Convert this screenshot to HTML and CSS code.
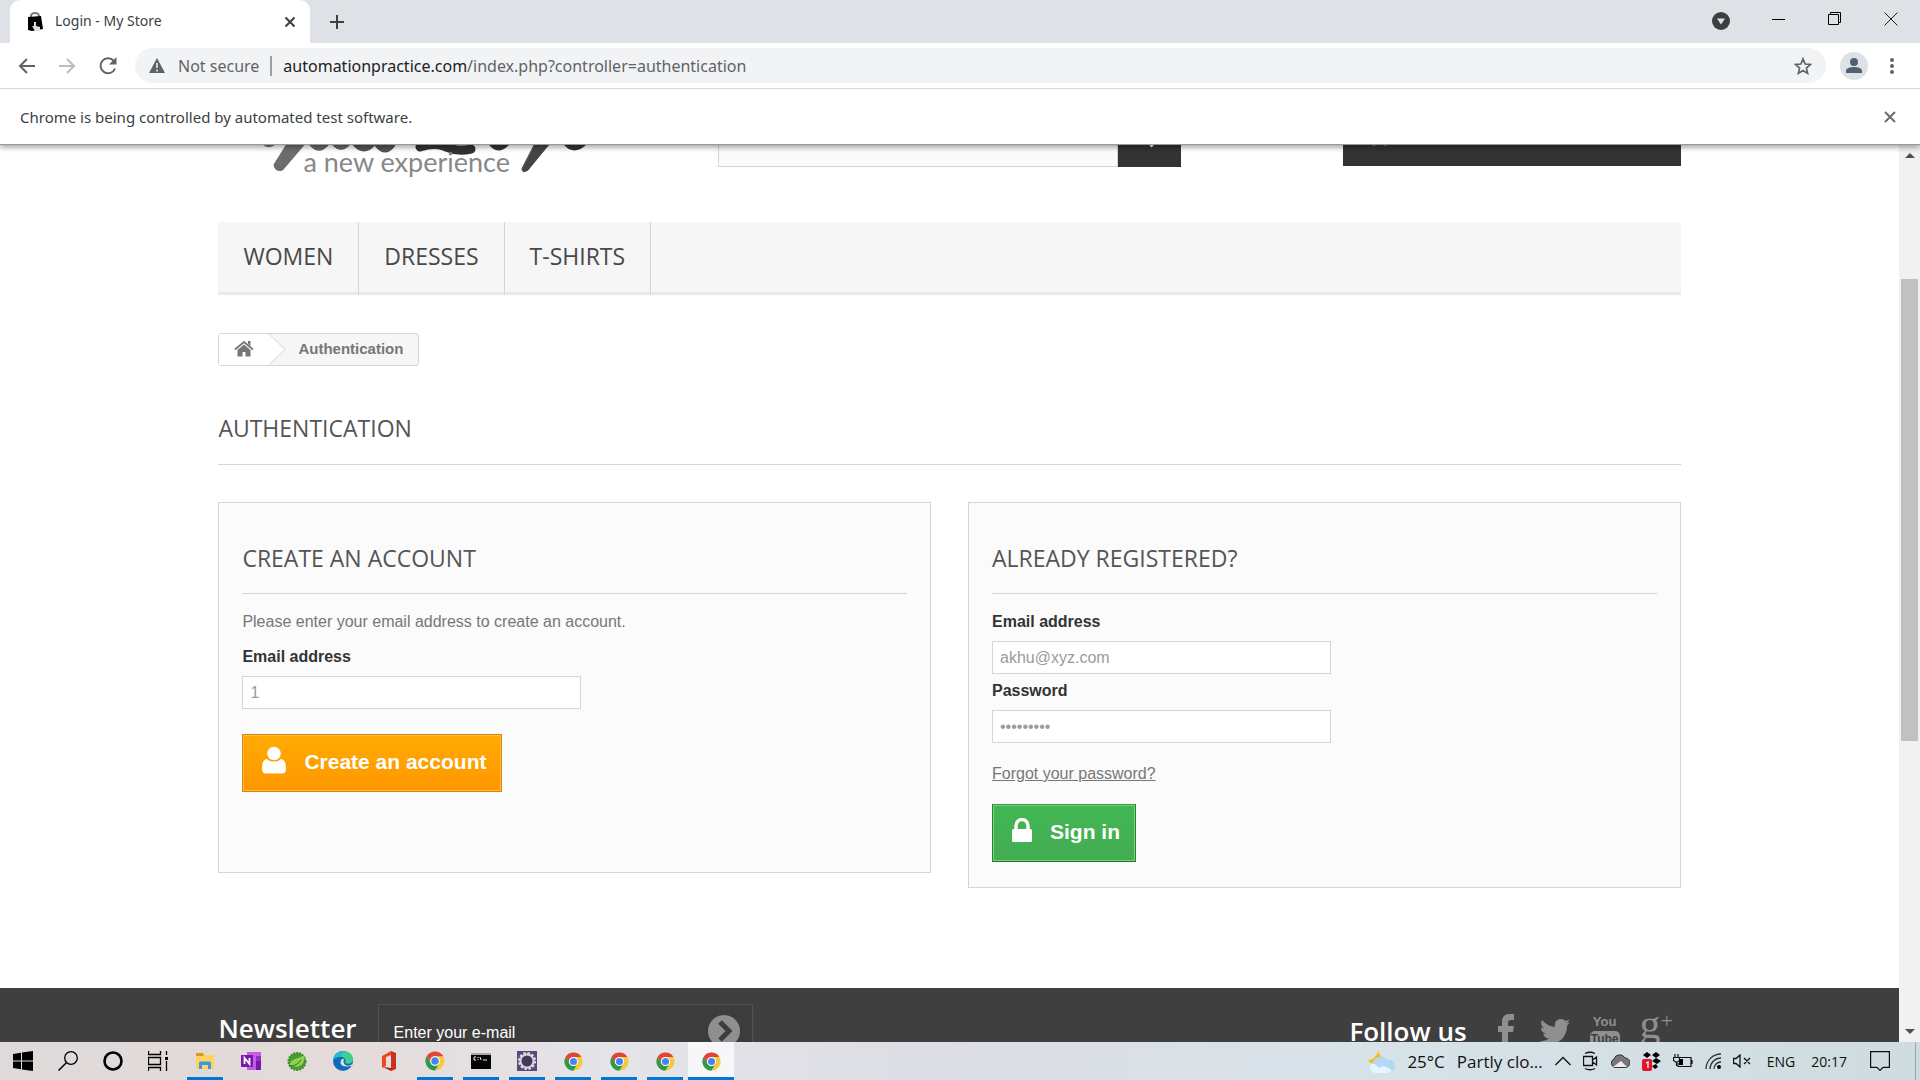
FILE: index.html
```html
<!DOCTYPE html>
<html lang="en">
<head>
<meta charset="utf-8">
<title>Login - My Store</title>
<link rel="stylesheet" href="styles.css">
</head>
<body>
<svg width="0" height="0" class="defs" aria-hidden="true">
  <symbol id="chrome" viewBox="0 0 48 48">
    <circle cx="24" cy="24" r="23" fill="#f6c945"/>
    <path d="M4.100 12.500A23 23 0 0 1 43.900 12.500H24A11.500 11.500 0 0 0 14 29.700Z" fill="#e0453a"/>
    <path d="M4.100 12.500A23 23 0 0 0 24 47L34 29.700A11.500 11.500 0 0 1 14 29.700Z" fill="#2a9a50"/>
    <circle cx="24" cy="24" r="11.500" fill="#fff"/>
    <circle cx="24" cy="24" r="9" fill="#4285f4"/>
  </symbol>
</svg>

<header class="browser">
  <div class="tabstrip">
    <div class="tab">
      <svg class="favicon" width="18" height="20" viewBox="0 0 18 20"><path d="M5 6V4a4 3 0 0 1 8 0v2" fill="none" stroke="#777" stroke-width="2"/><path d="M2 5l13-1 2 13-11 2-4-1z" fill="#000"/><path d="M8 10v4l-2 0 3 5h5v-4l-4-1v-4z" fill="#ddd"/></svg>
      <span class="tab-title">Login - My Store</span>
      <button class="plain" aria-label="Close tab"><svg width="12" height="12" viewBox="0 0 12 12"><path d="M1.500 1.500l9 9m0-9l-9 9" stroke="#3c4043" stroke-width="2"/></svg></button>
    </div>
    <button class="plain new-tab" aria-label="New tab"><svg width="16" height="16" viewBox="0 0 16 16"><path d="M8 1v14M1 8h14" stroke="#3c4043" stroke-width="2"/></svg></button>
    <div class="window-buttons">
      <button class="plain" aria-label="Search tabs"><svg width="18" height="22" viewBox="0 0 18 22"><circle cx="9" cy="13" r="9" fill="#3c4043"/><path d="M5 10.500h8l-4 6z" fill="#dee1e6"/></svg></button>
      <button class="plain" aria-label="Minimize"><svg width="14" height="14" viewBox="0 0 14 14"><path d="M0 7.500h13" stroke="#000"/></svg></button>
      <button class="plain" aria-label="Restore"><svg width="14" height="14" viewBox="0 0 14 14"><path d="M.5 2.500h10v10H.5zM2.500 2V.5h10v10H11" fill="none" stroke="#000"/></svg></button>
      <button class="plain" aria-label="Close"><svg width="14" height="14" viewBox="0 0 14 14"><path d="M.5.5l13 13m0-13l-13 13" stroke="#222"/></svg></button>
    </div>
  </div>
  <div class="toolbar">
    <button class="plain" aria-label="Back"><svg width="18" height="18" viewBox="0 0 18 18"><path d="M17 9H2M9 2L2 9l7 7" fill="none" stroke="#5f6368" stroke-width="2"/></svg></button>
    <button class="plain" aria-label="Forward"><svg width="18" height="18" viewBox="0 0 18 18"><path d="M1 9h15M9 2l7 7-7 7" fill="none" stroke="#babcbe" stroke-width="2"/></svg></button>
    <button class="plain" aria-label="Reload"><svg width="20" height="20" viewBox="0 0 20 20"><path d="M17 12.500A7.500 7.500 0 1 1 15.800 5" fill="none" stroke="#5f6368" stroke-width="2"/><path d="M18.500 1v7.500H11z" fill="#5f6368"/></svg></button>
    <div class="omnibox">
      <svg width="16" height="15" viewBox="0 0 16 15"><path d="M8 0l8 15H0z" fill="#5f6368"/><path d="M8 5v5M8 11.500v2" stroke="#f1f3f4" stroke-width="1.500"/></svg>
      <span class="insecure">Not secure</span>
      <span class="url"><b>automationpractice.com</b>/index.php?controller=authentication</span>
      <svg class="star" width="18" height="18" viewBox="0 0 24 24"><path d="M12 2.500l2.800 6.800 7.200.6-5.500 4.800 1.700 7.100L12 18l-6.200 3.800 1.700-7.100L2 9.900l7.200-.6z" fill="none" stroke="#5f6368" stroke-width="2.200"/></svg>
    </div>
    <svg class="avatar" width="28" height="28" viewBox="0 0 28 28"><circle cx="14" cy="14" r="14" fill="#dee1e6"/><circle cx="14" cy="10" r="4" fill="#525f73"/><path d="M6 21v-2c0-3 4-4 8-4s8 1 8 4v2z" fill="#525f73"/></svg>
    <button class="plain" aria-label="Menu"><svg width="4" height="18" viewBox="0 0 4 18"><g fill="#5f6368"><circle cx="2" cy="3" r="2"/><circle cx="2" cy="9" r="2"/><circle cx="2" cy="15" r="2"/></g></svg></button>
  </div>
  <div class="infobar">
    <span>Chrome is being controlled by automated test software.</span>
    <button class="plain" aria-label="Dismiss"><svg width="12" height="12" viewBox="0 0 12 12"><path d="M1 1l10 10m0-10L1 11" stroke="#6b6e72" stroke-width="2"/></svg></button>
  </div>
</header>

<div class="viewport">
  <div class="page">
    <div class="container masthead">
      <a class="logo" href="#" aria-label="My Store">
        <svg class="script-mark" width="344" height="44" viewBox="0 0 344 44">
          <g fill="none" stroke-linecap="round">
            <path d="M2 3q3 4 8 2" stroke="#777" stroke-width="5"/>
            <path d="M28 2L44 2L20 30Q14 32 13 26z" fill="#6c6e6e" stroke="#6c6e6e" stroke-width="3" stroke-linejoin="round"/>
            <path d="M51 5q6 6 12 0M74 5q5 5 10 0" stroke="#666" stroke-width="7"/>
            <path d="M94 3q8 10 16 0M117 5q6 8 12 0" stroke="#555" stroke-width="9"/>
            <path d="M158 8q16-5 26 0 12 5 25 2" stroke="#333" stroke-width="9"/>
            <path d="M230 4q6 8 14 0M305 4q7 8 16 0" stroke="#333" stroke-width="7"/>
            <path d="M274 3h15L266 31Q260 35 260 30z" fill="#444" stroke="#444"/>
          </g>
        </svg>
        <span class="tagline">a new experience</span>
      </a>
      <form class="search">
        <input type="text" aria-label="Search">
        <button type="button" aria-label="Search"><svg width="22" height="22" viewBox="0 0 22 22"><circle cx="9" cy="9" r="6" fill="none" stroke="#fff" stroke-width="3"/><path d="M13 13l6 6" stroke="#fff" stroke-width="4"/></svg></button>
      </form>
      <a class="cart" href="#"><svg width="26" height="22" viewBox="0 0 26 22"><path d="M0 2h5l3 12h13l3-9H6" fill="none" stroke="#fff" stroke-width="2"/><circle cx="9" cy="17" r="2.500" fill="#ccc"/><circle cx="20" cy="17" r="2.500" fill="#ccc"/></svg><b>Cart</b><span>(empty)</span></a>
    </div>
    <nav class="container menu">
      <a href="#">WOMEN</a><a href="#">DRESSES</a><a href="#">T-SHIRTS</a>
    </nav>
    <main class="container">
      <div class="crumbs">
        <a class="home" href="#" aria-label="Home"><svg width="20" height="16" viewBox="0 0 20 16"><path d="M3.500 9L10 3.500 16.500 9v6.500h-5V11h-3v4.500h-5z" fill="#777"/><path d="M1 8.500L10 1l9 7.500" fill="none" stroke="#777" stroke-width="1.800"/><path d="M14 0h2.500v5L14 3z" fill="#777"/></svg></a>
        <svg class="chevron" width="17" height="31" viewBox="0 0 17 31"><path d="M0 0l16 15.500L0 31" fill="#fff" stroke="#d6d4d4"/></svg>
        <span>Authentication</span>
      </div>
      <h1>AUTHENTICATION</h1>
      <div class="columns">
        <form class="box">
          <h2>CREATE AN ACCOUNT</h2>
          <p>Please enter your email address to create an account.</p>
          <label for="new-email">Email address</label>
          <input id="new-email" type="text" value="1">
          <button type="button" class="action orange"><svg width="24" height="28" viewBox="0 0 24 28"><circle cx="12" cy="7.500" r="6.800" fill="#fff"/><path d="M5 13c2 2 4 2.500 7 2.500s5-.5 7-2.500c4 0 5 5 5 10 0 3-1.500 4.500-4 4.500H4C1.500 27.500 0 26 0 23c0-5 1-10 5-10z" fill="#fff"/></svg>Create an account</button>
        </form>
        <form class="box">
          <h2>ALREADY REGISTERED?</h2>
          <label for="email">Email address</label>
          <input id="email" type="text" value="akhu@xyz.com">
          <label for="password">Password</label>
          <input id="password" type="password" value="abcdefghi">
          <a class="forgot" href="#">Forgot your password?</a>
          <button type="button" class="action green"><svg width="20" height="24" viewBox="0 0 20 24"><path d="M4 12V7.500a6 6 0 0 1 12 0V12" fill="none" stroke="#fff" stroke-width="3.400"/><rect y="11" width="20" height="13" rx="1.500" fill="#fff"/></svg>Sign in</button>
        </form>
      </div>
    </main>
    <footer>
      <div class="container footer-row">
        <h3><label for="newsletter">Newsletter</label></h3>
        <div class="newsletter">
          <input id="newsletter" type="text" value="Enter your e-mail">
          <button type="button" class="plain" aria-label="Subscribe"><svg width="32" height="32" viewBox="0 0 32 32"><circle cx="16" cy="16" r="16" fill="#908f8f"/><path d="M12 7l9 9-9 9" fill="none" stroke="#3d3d3d" stroke-width="5"/></svg></button>
        </div>
        <h3 class="follow">Follow us</h3>
        <div class="social">
          <a href="#" aria-label="Facebook"><svg width="16" height="34" viewBox="0 0 16 34"><path d="M16 0v6h-3q-3 0-3 3v3h6l-1 6h-5v16H4V18H0v-6h4V8q0-8 8-8z"/></svg></a>
          <a href="#" class="twitter" aria-label="Twitter"><svg width="30" height="26" viewBox="0 0 30 26"><path d="M30 3.500l-3 3.200C27 17 20 25 10 25c-4 0-7-1-10-3 4 0 6-.5 9-2.600-3 0-5-2-6-4.500h3C3 14 1 12 1 8.500l3 1C1 7 .5 4 2 1c4 4.500 8 6.500 13 7C14 3 17 0 21 0c2 0 3.500.8 4.500 2L29.500.5 27 4z"/></svg></a>
          <a href="#" class="youtube" aria-label="YouTube"><span>You</span><span class="tube">Tube</span></a>
          <a href="#" class="gplus" aria-label="Google Plus">g<sup>+</sup></a>
        </div>
      </div>
    </footer>
  </div>
  <div class="scrollbar">
    <svg width="21" height="21" viewBox="0 0 21 21"><path d="M6 13l5-5 5 5z" fill="#505050"/></svg>
    <div class="track"><div class="thumb"></div></div>
    <svg width="21" height="21" viewBox="0 0 21 21"><path d="M6 8l5 5 5-5z" fill="#505050"/></svg>
  </div>
</div>

<div class="taskbar">
  <div class="system">
    <button class="plain" aria-label="Start"><svg width="20" height="20" viewBox="0 0 20 20"><path d="M0 3l8-1.200V9.500H0zM9 1.600L20 0v9.500H9zM0 10.500h8v7.700L0 17zM9 10.500h11V20L9 18.400z"/></svg></button>
    <button class="plain" aria-label="Search"><svg width="20" height="20" viewBox="0 0 20 20"><circle cx="13" cy="7" r="6.300" fill="none" stroke="#000" stroke-width="1.300"/><path d="M8.500 11.500L.5 19.500" stroke="#000" stroke-width="1.500"/></svg></button>
    <button class="plain" aria-label="Cortana"><svg width="20" height="20" viewBox="0 0 20 20"><circle cx="10" cy="10" r="8.500" fill="none" stroke="#000" stroke-width="2.600"/></svg></button>
    <button class="plain" aria-label="Task view"><svg width="20" height="20" viewBox="0 0 20 20"><path d="M.5 0v3.500h12V0M.5 6.500h12v7H.5zM.5 20v-3.500h12V20M18.500 0v4M18.500 10v10" fill="none" stroke="#000" stroke-width="1.300"/><path d="M17 6h3v3h-3z"/></svg></button>
  </div>
  <div class="apps">
    <button class="plain open" aria-label="File Explorer"><svg width="20" height="20" viewBox="0 0 20 20"><path d="M1 2h7l1 2h10v14H1z" fill="#ffd45e"/><path d="M1 2h7l1 2-1 1H1z" fill="#d99b12"/><path d="M4 18v-6q0-1.500 1.500-1.500h9Q16 10.500 16 12v6h-3v-4H7v4z" fill="#3b97e3"/></svg></button>
    <button class="plain" aria-label="OneNote"><svg width="20" height="20" viewBox="0 0 20 20"><path d="M6 1h14v18H6z" fill="#c25ee8"/><path d="M15 5h5v5h-5z" fill="#9332bf"/><path d="M15 10h5v9h-5z" fill="#7719aa"/><path d="M0 4h12v12H0z" fill="#7719aa"/><path d="M3.500 13V7l5 6V7" fill="none" stroke="#fff" stroke-width="1.800"/></svg></button>
    <button class="plain" aria-label="Spring Tools"><svg width="20" height="20" viewBox="0 0 20 20"><circle cx="10" cy="10.500" r="8.500" fill="#4a9c2e" stroke="#3f8a2a" stroke-width="2" stroke-dasharray="2 1"/><path d="M3 14C4 6 12 9 17 4c2 8-4 14-11 11z" fill="#8fd14f"/><path d="M3 15q7 0 11-6" fill="none" stroke="#2f7a1b"/></svg></button>
    <button class="plain" aria-label="Edge"><svg width="20" height="20" viewBox="0 0 20 20"><circle cx="10" cy="10" r="10" fill="#0f6cbd"/><path d="M0 9C2-3 20-2 20 8c0 4-4 6-8 4 2-4-2-7-6-6Q2 6 0 9z" fill="#3ecf8e"/><path d="M0 9C1 1 9-2 14 1 8 1 8 5 6 6Q2 6 0 9z" fill="#26b5dd"/><path d="M9 8c-4 5 1 9 8 7l2 0c1-1 1-2-1-1-5 2-9-1-7-6z" fill="#e6e2e2"/></svg></button>
    <button class="plain" aria-label="Office"><svg width="20" height="20" viewBox="0 0 20 20"><path d="M12 0l5 2v16l-5 2z" fill="#c8321a"/><path d="M3 5l9-5v4L7 6v9l-4 2z" fill="#ea4a1f"/><path d="M4 16l8 1v3z" fill="#b3200f"/></svg></button>
    <button class="plain open" aria-label="Chrome"><svg width="20" height="20"><use href="#chrome"/></svg></button>
    <button class="plain open" aria-label="Command Prompt"><svg width="20" height="18" viewBox="0 0 20 18"><path d="M0 1h20v16H0z" fill="#050505"/><path d="M0 1h20v2H0z" fill="#aaa"/><path d="M5 5H3v3h2M7 5v1M7 7v1M9 5l1 3M12 8h4" fill="none" stroke="#eee"/></svg></button>
    <button class="plain open" aria-label="Eclipse"><svg width="20" height="20" viewBox="0 0 20 20"><path d="M0 0h20v20H0z" fill="#5b4779"/><circle cx="10" cy="10" r="7.800" fill="none" stroke="#e0dde3" stroke-width="2.500" stroke-dasharray="2.500 1.600"/><circle cx="10" cy="10" r="6.500" fill="#433a58" stroke="#d9d6dc" stroke-width="2"/></svg></button>
    <button class="plain open" aria-label="Chrome window 2"><svg width="19" height="19"><use href="#chrome"/></svg></button>
    <button class="plain open" aria-label="Chrome window 3"><svg width="19" height="19"><use href="#chrome"/></svg></button>
    <button class="plain open" aria-label="Chrome window 4"><svg width="19" height="19"><use href="#chrome"/></svg></button>
    <button class="plain open current" aria-label="Chrome window 5"><svg width="19" height="19"><use href="#chrome"/></svg></button>
  </div>
  <div class="tray">
    <svg width="28" height="26" viewBox="0 0 28 26"><path d="M11 0c0 5 2 9 7 10l-4 5H4l-4-3c5 1 12-4 11-12z" fill="#ffb900"/><path d="M7 25a6 6 0 0 1-1-11 8 8 0 0 1 14-2c5-1 8 2 8 6s-3 7-7 7z" fill="#b4d8f2"/><path d="M7 25a6 6 0 0 1-3-9c3-1 6 1 8 4 3-3 9-2 13 3q-2 2-5 2z" fill="#e6f4fd"/></svg>
    <span class="temp">25°C</span>
    <span class="weather">Partly clo...</span>
    <svg width="16" height="10" viewBox="0 0 16 10"><path d="M.5 9L8 1.500 15.500 9" fill="none" stroke="#111" stroke-width="1.300"/></svg>
    <svg width="15" height="20" viewBox="0 0 15 20"><path d="M.5 5.500h9v9h-9zM9.500 9l4-3v8l-4-3M2 2.500Q7 0 12 2.500M2 17.500q5 2.500 10 0" fill="none" stroke="#111" stroke-width="1.300"/></svg>
    <svg width="20" height="14" viewBox="0 0 20 14"><path d="M5 13.500a4.500 4.500 0 0 1-1-8.500 6 6 0 0 1 11-1c4 0 5 3 5 5s-2 4.500-5 4.500z" fill="#777" stroke="#333"/><path d="M3 13l8-6 6 6z" fill="#eee"/></svg>
    <svg width="19" height="19" viewBox="0 0 19 19"><path d="M1 3l4-3 4 3-4 3zM10 3l4-3 4 3-4 3zM10 9l4-3 5 3-4 3zM10 14l4-2 2 3-3 2z"/><rect y="7" width="10" height="12" rx="2" fill="#e3122d"/><path d="M4 11l2-1v6" fill="none" stroke="#fff" stroke-width="1.300"/></svg>
    <svg width="20" height="14" viewBox="0 0 20 14"><path d="M7 3.500h11v9H5V9M19 6v4M2 0v3M5 0v3M.5 3.500h6v3l-2 1.500h-2l-2-1.500zM3.500 8v4" fill="none" stroke="#111" stroke-width="1.200"/><path d="M6 5h4v6H6z"/></svg>
    <svg width="16" height="16" viewBox="0 0 16 16"><path d="M1 16A15 15 0 0 1 16 1M5 16A11 11 0 0 1 16 5M9 16a7 7 0 0 1 7-7" fill="none" stroke="#333" stroke-width="1.300"/><circle cx="14" cy="14" r="2"/></svg>
    <svg width="18" height="14" viewBox="0 0 18 14"><path d="M.5 4.500H3L7 1v12L3 9.500H.5zM11 4l6 6m0-6l-6 6" fill="none" stroke="#111" stroke-width="1.300"/></svg>
    <span class="lang">ENG</span>
    <span class="clock">20:17</span>
    <svg width="20" height="20" viewBox="0 0 20 20"><path d="M.6.6h18.800v15.800H13L10 19.400 7 16.400H.6z" fill="none" stroke="#111" stroke-width="1.200"/></svg>
    <i class="desktop-edge"></i>
  </div>
</div>
</body>
</html>
```
FILE: styles.css
```css
* { box-sizing: border-box; }

body {
  margin: 0;
  height: 100vh;
  display: flex;
  flex-direction: column;
  overflow: hidden;
  background: #fff;
  font-family: "Liberation Sans", Arial, sans-serif;
  font-size: 16px;
  color: #777;
}

svg { display: block; flex: none; }
.defs { position: absolute; }
a { color: inherit; text-decoration: none; }
h1, h2, h3, p { margin: 0; }

.plain {
  border: 0;
  padding: 0;
  background: none;
  display: flex;
  align-items: center;
  justify-content: center;
}

/* Browser frame */
.browser {
  position: relative;
  z-index: 2;
  background: #fff;
  font-family: "Noto Sans", sans-serif;
  color: #3c4043;
  border-bottom: 1px solid #999;
  box-shadow: 0 2px 6px rgba(0, 0, 0, .4);
}

.tabstrip {
  display: flex;
  height: 43px;
  padding-left: 10px;
  background: #dee1e6;
}

.tab {
  display: flex;
  align-items: center;
  width: 300px;
  padding: 0 14px 0 16px;
  background: #fff;
  border-radius: 10px 10px 0 0;
}

.tab-title { flex: 1; margin-left: 11px; padding-bottom: 2px; font-size: 14px; }
.new-tab { width: 54px; }

.window-buttons {
  display: flex;
  align-items: center;
  gap: 42px;
  margin-left: auto;
  padding: 0 22px 6px 0;
}

.toolbar {
  display: flex;
  align-items: center;
  height: 45px;
  gap: 22px;
  padding: 0 26px 0 18px;
}

.omnibox {
  flex: 1;
  display: flex;
  align-items: center;
  height: 35px;
  margin: 0 -8px 0 -5px;
  padding: 0 14px;
  border-radius: 18px;
  background: #f1f3f4;
  font-size: 16px;
  color: #5f6368;
}

.insecure {
  margin-left: 13px;
  padding-right: 11px;
  border-right: 2px solid #9aa0a6;
  line-height: 20px;
}

.url { margin-left: 11px; }
.url b { font-weight: 400; color: #202124; }
.star { margin-left: auto; }

.infobar {
  display: flex;
  align-items: center;
  justify-content: space-between;
  height: 56px;
  padding: 0 24px 0 20px;
  border-top: 1px solid #d5d7da;
  font-size: 15px;
}

/* Scrolled web page */
.viewport { flex: 1; min-height: 0; display: flex; }
.page { flex: 1; min-width: 0; overflow: hidden; }
.container { width: 77%; max-width: 1463px; margin: 0 auto; }

.masthead {
  display: flex;
  align-items: flex-start;
  height: 117px;
  margin-top: -40px;
}

.logo { flex: none; width: 500px; padding: 34px 0 0 44px; }
.script-mark { margin-bottom: -39px; }
.tagline {
  display: block;
  padding-left: 41px;
  font-family: Lato, sans-serif;
  font-size: 27px;
  line-height: 36px;
  color: #888;
}

.search { display: flex; width: 463px; height: 62px; }
.search input {
  flex: 1;
  min-width: 0;
  border: 1px solid #d6d4d4;
  background: #fbfbfb;
}
.search button {
  width: 63px;
  border: 0;
  padding: 4px 0 0 16px;
  background: #333;
}

.cart {
  display: flex;
  align-items: center;
  gap: 18px;
  width: 338px;
  height: 61px;
  margin-left: auto;
  padding: 2px 22px 0;
  background: #333;
  color: #999;
}
.cart b { color: #fff; }
.cart span { padding-left: 10px; }

.menu {
  display: flex;
  height: 73px;
  border-bottom: 3px solid #e9e9e9;
  background: #f6f6f6;
}
.menu a {
  height: 73px;
  padding: 16px 25px 0;
  border-right: 1px solid #d6d4d4;
  font: 500 23px/36px "Open Sans", sans-serif;
  color: #484848;
}

.crumbs {
  display: flex;
  align-items: center;
  width: max-content;
  height: 33px;
  margin-top: 38px;
  padding-right: 15px;
  border: 1px solid #d6d4d4;
  border-radius: 3px;
  background: #f6f6f6;
  font-size: 15px;
  font-weight: 700;
}
.crumbs span { padding-bottom: 2px; }
.home {
  display: flex;
  align-items: center;
  justify-content: center;
  width: 50px;
  height: 31px;
  padding-bottom: 2px;
  background: #fff;
}
.chevron { margin-right: 12px; }

h1, h2 {
  border-bottom: 1px solid #d6d4d4;
  font: 500 23px/28px "Open Sans", sans-serif;
  color: #555;
}
h1 { margin-top: 48px; padding-bottom: 22px; }

.columns {
  display: flex;
  align-items: flex-start;
  gap: 37px;
  margin-top: 37px;
}
.box {
  flex: 1;
  display: flex;
  flex-direction: column;
  align-items: flex-start;
  min-height: 371px;
  padding: 41px 23px 25px;
  border: 1px solid #d6d4d4;
  background: #fbfbfb;
}
.box h2 { width: 100%; padding-bottom: 21px; margin-bottom: 17px; }
.box p { margin-bottom: 14px; line-height: 21px; }
.box label { line-height: 21px; font-weight: 700; color: #333; }
.box input {
  width: 339px;
  height: 33px;
  margin: 9px 0 6px;
  padding: 0 7px;
  border: 1px solid #d6d4d4;
  background: #fff;
  font: inherit;
  color: #9c9b9b;
}
.forgot { margin: 14px 0 20px; line-height: 21px; text-decoration: underline; }

.action {
  display: flex;
  align-items: center;
  height: 58px;
  gap: 18px;
  padding: 0 15px 2px 19px;
  border: 1px solid;
  color: #fff;
  font: 700 21px "Liberation Sans", Arial, sans-serif;
}
.action svg { margin-bottom: 4px; }
.orange {
  margin-top: 19px;
  border-color: #db8600;
  background: linear-gradient(#ffab02, #ff9600);
  box-shadow: inset 0 0 0 1px #ffb94a;
}
.green {
  border-color: #3a9847 #2c8037 #257531;
  background: linear-gradient(#43b754, #42ac52);
  box-shadow: inset 0 0 0 1px #74d578;
}

footer { height: 160px; margin-top: 100px; padding-top: 16px; background: #3f3f3f; }
.footer-row { display: flex; align-items: flex-start; }
footer h3 {
  padding-top: 6px;
  font: 600 26px/36px "Open Sans", sans-serif;
  color: #fff;
}
.newsletter {
  display: flex;
  align-items: flex-start;
  width: 375px;
  margin-left: 21px;
  padding: 10px 12px 0 15px;
  border: 1px solid #515151;
  background: #3c3c3c;
}
.newsletter input {
  flex: 1;
  min-width: 0;
  height: 36px;
  padding: 0;
  border: 0;
  background: none;
  color: #fff;
  font: inherit;
}
footer .follow { margin-left: auto; padding-top: 9px; }
.social {
  display: flex;
  align-items: flex-start;
  gap: 26px;
  width: 214px;
  padding: 10px 0 0 31px;
  color: #908f8f;
}
.social svg { fill: #908f8f; }
.twitter { padding-top: 5px; }
.youtube {
  display: flex;
  flex-direction: column;
  align-items: center;
  gap: 1px;
  margin-left: -6px;
  font: 700 13px/16px "Liberation Sans", Arial, sans-serif;
}
.tube {
  width: 30px;
  border-radius: 5px 5px 0 0;
  background: #908f8f;
  color: #3f3f3f;
  text-align: center;
  font-size: 12px;
}
.gplus { margin-left: -6px; font: 42px/20px "Liberation Serif", serif; }
.gplus sup { font-size: 22px; line-height: 0; vertical-align: 10px; }

.scrollbar {
  display: flex;
  flex-direction: column;
  width: 21px;
  background: #f1f1f1;
}
.track { flex: 1; display: flex; flex-direction: column; padding: 0 2px; }
.track::before { content: ""; flex: 113; }
.track::after { content: ""; flex: 280; }
.thumb { flex: 462; background: #c1c1c1; }

/* Taskbar */
.taskbar {
  display: flex;
  height: 38px;
  background: linear-gradient(90deg, #dfd9d9, #e4dbda 18%, #e4e4e9 32%, #dcdde4 50%, #d8e3e9 70%, #cfdcdf);
  color: #111;
  font-family: "Open Sans", sans-serif;
}
.system, .apps { display: flex; }
.system .plain { width: 45px; }
.apps { margin-left: 2px; }
.apps .plain { width: 46px; position: relative; }
.open::after {
  content: "";
  position: absolute;
  inset: auto 5px 0;
  height: 3px;
  background: #0078d7;
}
.apps .current { background: #f7f7f9; }
.current::after { inset: auto 0 0; }

.tray {
  display: flex;
  align-items: center;
  gap: 12px;
  margin-left: auto;
  padding-right: 4px;
}
.temp, .weather { font-size: 17px; }
.lang, .clock { font-size: 14px; }
.lang { margin-left: 4px; }
.clock { margin: 0 11px 0 4px; }
.desktop-edge { width: 1px; height: 38px; margin-left: 13px; background: #9aa8aa; }
```
